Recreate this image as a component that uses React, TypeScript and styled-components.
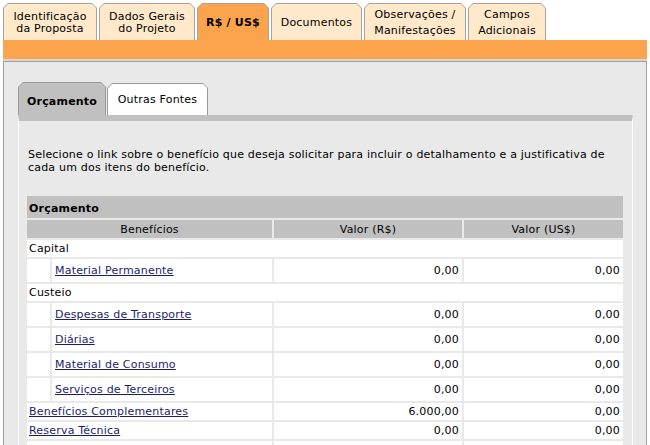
import React from 'react';
import styled, { createGlobalStyle, css } from 'styled-components';

const GlobalStyle = createGlobalStyle`
  html, body {
    margin: 0;
    padding: 0;
    background: #fff;
  }
  body {
    font-family: "DejaVu Sans", Verdana, sans-serif;
    font-size: 11px;
    letter-spacing: 0.2px;
    color: #000;
  }
`;

const Page = styled.div`
  width: 644px;
  padding: 3px 3px 0;
`;

const TabStrip = styled.div`
  display: flex;
  gap: 2px;
  height: 37px;
`;

const TabFrame = styled.div<{ w: number }>`
  width: ${p => p.w}px;
  height: 37px;
  padding: 1px 1px 0;
  box-sizing: border-box;
  background: #a3a3a3;
  clip-path: polygon(5px 0, calc(100% - 5px) 0, 100% 5px, 100% 100%, 0 100%, 0 5px);
`;

const TabFace = styled.div<{ active?: boolean; lh: number }>`
  height: 100%;
  display: flex;
  align-items: center;
  justify-content: center;
  text-align: center;
  line-height: ${p => p.lh}px;
  padding-top: 1px;
  box-sizing: border-box;
  background: #ffe9ca;
  clip-path: polygon(4px 0, calc(100% - 4px) 0, 100% 4px, 100% 100%, 0 100%, 0 4px);

  ${p => p.active && css`
    background: #fba44d;
    font-weight: bold;
  `}
`;

const OrangeBar = styled.div`
  height: 19px;
  background: #fba44d;
  border-bottom: 2px solid #d6d6d6;
`;

const Panel = styled.div`
  min-height: 400px;
  background: #e9e9e9;
  border: 1px solid #a0a0a0;
  border-bottom: none;
  padding: 20px 13px 0 14px;
`;

const SubTabs = styled.div`
  display: flex;
  align-items: flex-end;
  gap: 1px;
  height: 33px;
`;

const SubTabFrame = styled.div<{ w: number; h: number }>`
  width: ${p => p.w}px;
  height: ${p => p.h}px;
  padding: 1px 1px 0;
  box-sizing: border-box;
  background: #9a9a9a;
  clip-path: polygon(5px 0, calc(100% - 5px) 0, 100% 5px, 100% 100%, 0 100%, 0 5px);
`;

const SubTabFace = styled.div<{ active?: boolean }>`
  height: 100%;
  box-sizing: border-box;
  display: flex;
  align-items: flex-end;
  justify-content: center;
  line-height: 13px;
  padding-bottom: 9px;
  background: #fff;
  clip-path: polygon(4px 0, calc(100% - 4px) 0, 100% 4px, 100% 100%, 0 100%, 0 4px);

  ${p => p.active && css`
    background: #c0c0c0;
    font-weight: bold;
    padding-bottom: 7px;
  `}
`;

const Body = styled.div`
  min-height: 330px;
  border-top: 6px solid #c0c0c0;
  border-left: 1px solid #fff;
  border-right: 1px solid #fff;
  padding: 27px 7px 0 6px;
`;

const Intro = styled.p`
  margin: 0 0 0 3px;
  line-height: 13px;
`;

const Table = styled.table`
  margin-top: 20px;
  width: 600px;
  table-layout: fixed;
  border-collapse: separate;
  border-spacing: 2px;
`;

const TitleCell = styled.td`
  height: 22px;
  padding: 3px 2px 0;
  box-sizing: border-box;
  background: #c0c0c0;
  font-weight: bold;
  line-height: 13px;
`;

const HeadCell = styled.td`
  height: 18px;
  padding: 0;
  background: #c0c0c0;
  text-align: center;
  line-height: 13px;
`;

const Cell = styled.td<{ h: number; num?: boolean }>`
  height: ${p => p.h}px;
  padding: 0 2px;
  background: #fff;
  line-height: 13px;
  white-space: nowrap;

  ${p => p.num && css`
    text-align: right;
    padding-right: 3px;
  `}
`;

const NestCell = styled.td`
  padding: 0;
`;

const Nest = styled.div`
  display: flex;
  gap: 2px;
  height: 23px;
`;

const Indent = styled.div`
  width: 23px;
  background: #fff;
`;

const NestLabel = styled.div`
  flex: 1;
  display: flex;
  align-items: center;
  padding-left: 3px;
  background: #fff;
`;

const Link = styled.a`
  color: #1d1d6b;
  text-decoration: underline;
  cursor: pointer;
`;

const topTabs = [
  { label: ['Identificação', 'da Proposta'], w: 94, lh: 12 },
  { label: ['Dados Gerais', 'do Projeto'], w: 96, lh: 12 },
  { label: ['R$ / US$'], w: 72, lh: 13, active: true },
  { label: ['Documentos'], w: 91, lh: 13 },
  { label: ['Observações /', 'Manifestações'], w: 102, lh: 16 },
  { label: ['Campos', 'Adicionais'], w: 78, lh: 16 },
];

type Row =
  | { kind: 'group'; label: string }
  | { kind: 'item'; label: string; brl: string; usd: string }
  | { kind: 'link'; label: string; brl: string; usd: string }
  | { kind: 'blank'; label: string };

const rows: Row[] = [
  { kind: 'group', label: 'Capital' },
  { kind: 'item', label: 'Material Permanente', brl: '0,00', usd: '0,00' },
  { kind: 'group', label: 'Custeio' },
  { kind: 'item', label: 'Despesas de Transporte', brl: '0,00', usd: '0,00' },
  { kind: 'item', label: 'Diárias', brl: '0,00', usd: '0,00' },
  { kind: 'item', label: 'Material de Consumo', brl: '0,00', usd: '0,00' },
  { kind: 'item', label: 'Serviços de Terceiros', brl: '0,00', usd: '0,00' },
  { kind: 'link', label: 'Benefícios Complementares', brl: '6.000,00', usd: '0,00' },
  { kind: 'link', label: 'Reserva Técnica', brl: '0,00', usd: '0,00' },
  { kind: 'blank', label: 'next' },
];

const BudgetRow = ({ row }: { row: Row }) => {
  if (row.kind === 'group') {
    return <tr><Cell h={17} colSpan={3}>{row.label}</Cell></tr>;
  }
  if (row.kind === 'blank') {
    return <tr><Cell h={17} /><Cell h={17} /><Cell h={17} /></tr>;
  }
  if (row.kind === 'item') {
    return <tr>
      <NestCell>
        <Nest>
          <Indent />
          <NestLabel><Link>{row.label}</Link></NestLabel>
        </Nest>
      </NestCell>
      <Cell h={23} num>{row.brl}</Cell>
      <Cell h={23} num>{row.usd}</Cell>
    </tr>;
  }
  return <tr>
    <Cell h={17}><Link>{row.label}</Link></Cell>
    <Cell h={17} num>{row.brl}</Cell>
    <Cell h={17} num>{row.usd}</Cell>
  </tr>;
};

export default function App() {
  return <>
    <GlobalStyle />
    <Page>
      <TabStrip>
        {topTabs.map(tab => <TabFrame key={tab.label[0]} w={tab.w}>
          <TabFace active={tab.active} lh={tab.lh}>
            <div>{tab.label.map(line => <div key={line}>{line}</div>)}</div>
          </TabFace>
        </TabFrame>)}
      </TabStrip>
      <OrangeBar />
      <Panel>
        <SubTabs>
          <SubTabFrame w={88} h={33}><SubTabFace active>Orçamento</SubTabFace></SubTabFrame>
          <SubTabFrame w={101} h={32}><SubTabFace>Outras Fontes</SubTabFace></SubTabFrame>
        </SubTabs>
        <Body>
          <Intro>
            Selecione o link sobre o benefício que deseja solicitar para incluir o detalhamento e a justificativa de cada um dos itens do benefício.
          </Intro>
          <Table>
            <colgroup>
              <col style={{ width: 245 }} />
              <col style={{ width: 188 }} />
              <col style={{ width: 159 }} />
            </colgroup>
            <tbody>
              <tr><TitleCell colSpan={3}>Orçamento</TitleCell></tr>
              <tr>
                <HeadCell>Benefícios</HeadCell>
                <HeadCell>Valor (R$)</HeadCell>
                <HeadCell>Valor (US$)</HeadCell>
              </tr>
              {rows.map(row => <BudgetRow key={row.label} row={row} />)}
            </tbody>
          </Table>
        </Body>
      </Panel>
    </Page>
  </>;
}
